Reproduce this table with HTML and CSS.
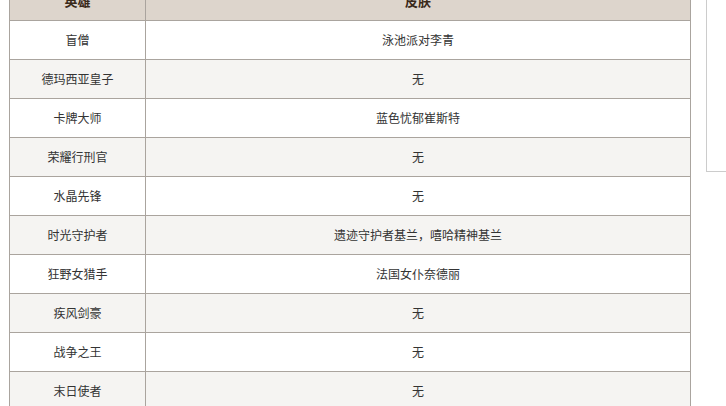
FILE: index.html
```html
<!DOCTYPE html>
<html lang="zh">
<head>
<meta charset="utf-8">
<link rel="stylesheet" href="styles.css">
</head>
<body>
<div class="page">
  <table class="skins">
    <thead>
      <tr><th class="c1">英雄</th><th>皮肤</th></tr>
    </thead>
    <tbody>
      <tr><td>盲僧</td><td>泳池派对李青</td></tr>
      <tr><td>德玛西亚皇子</td><td>无</td></tr>
      <tr><td>卡牌大师</td><td>蓝色忧郁崔斯特</td></tr>
      <tr><td>荣耀行刑官</td><td>无</td></tr>
      <tr><td>水晶先锋</td><td>无</td></tr>
      <tr><td>时光守护者</td><td>遗迹守护者基兰，嘻哈精神基兰</td></tr>
      <tr><td>狂野女猎手</td><td>法国女仆奈德丽</td></tr>
      <tr><td>疾风剑豪</td><td>无</td></tr>
      <tr><td>战争之王</td><td>无</td></tr>
      <tr><td>末日使者</td><td>无</td></tr>
    </tbody>
  </table>
  <div class="side"></div>
</div>
</body>
</html>
```
FILE: styles.css
```css
html, body {
  margin: 0;
  padding: 0;
  background: #fff;
  overflow: hidden;
}
body {
  font-family: "Noto Sans CJK SC", "Noto Sans", sans-serif;
  font-size: 12px;
  color: #333;
}
.page {
  display: flex;
  align-items: flex-start;
  padding-left: 9px;
  gap: 15px;
}
.skins {
  border-collapse: collapse;
  width: 682px;
  margin-top: -19px;
  flex: none;
}
.skins th, .skins td {
  border: 1px solid #aaa49e;
  text-align: center;
  padding: 0;
  height: 38px;
  line-height: 16px;
}
.skins th {
  background: #ddd5cc;
  font-weight: bold;
  font-size: 13px;
  color: #3a2a1a;
}
.skins th.c1 {
  width: 135px;
}
.skins tbody tr:nth-child(even) td {
  background: #f5f4f2;
}
.side {
  flex: 1;
  height: 172px;
  border-left: 1px solid #cccccc;
  border-bottom: 1px solid #cccccc;
  box-sizing: border-box;
}
```
